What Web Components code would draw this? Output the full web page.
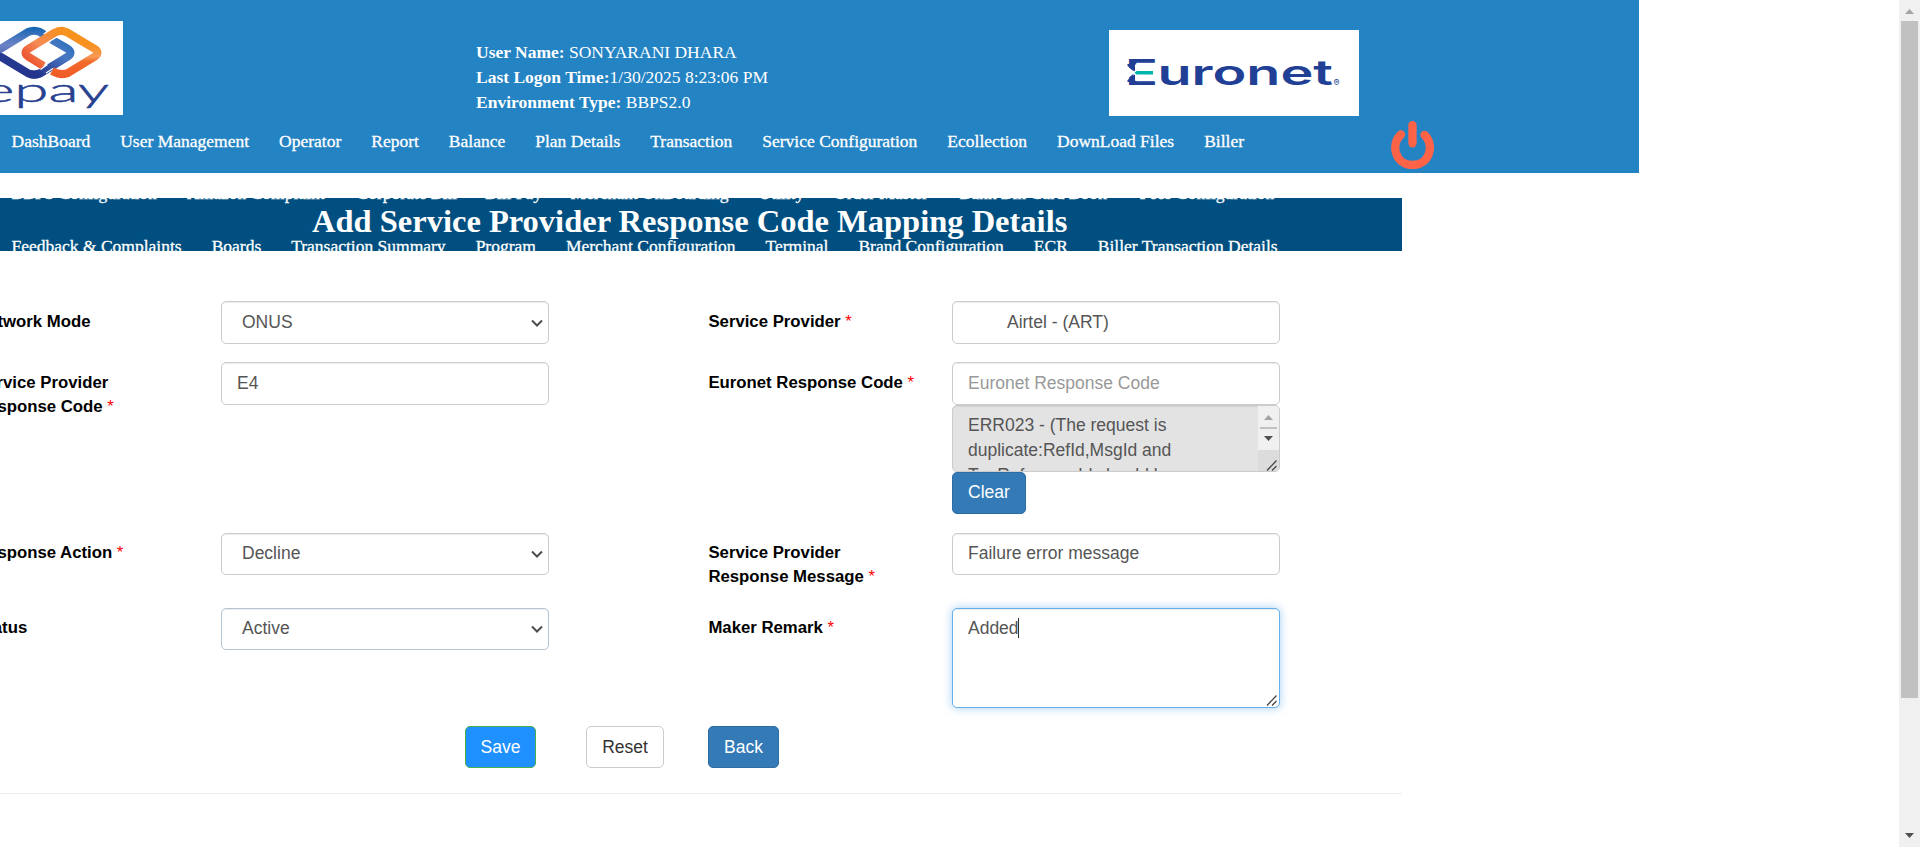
<!DOCTYPE html>
<html lang="en">
<head>
<meta charset="utf-8">
<title>Add Service Provider Response Code Mapping Details</title>
<style>
html,body{margin:0;height:100%;overflow:hidden;background:#fff}
body{font-family:"Liberation Sans",Arial,sans-serif;font-size:17.5px;line-height:25px;color:#000}
</style>
</head>
<body>
<app-shell></app-shell>
<script>
const define = (name, html, setup) => customElements.define(name, class extends HTMLElement {
  connectedCallback() {
    if (this.shadowRoot) return;
    const root = this.attachShadow({mode: 'open'});
    const t = document.createElement('template');
    t.innerHTML = html;
    root.append(t.content.cloneNode(true));
    if (setup) setup(this, root);
  }
});

define('epay-logo', `<style>:host{display:block;width:123px;height:94px;background:#fff;overflow:hidden}svg{display:block}</style>
<svg width="123" height="94" viewBox="0 21 123 94">
<defs>
<linearGradient id="b" x1="0" y1="27" x2="0" y2="78" gradientUnits="userSpaceOnUse"><stop offset="0" stop-color="#1265b3"/><stop offset=".35" stop-color="#6d83c6"/><stop offset=".5" stop-color="#5672bb"/><stop offset=".52" stop-color="#263b92"/><stop offset="1" stop-color="#24348c"/></linearGradient>
<linearGradient id="c" x1="70" y1="40" x2="40" y2="76" gradientUnits="userSpaceOnUse"><stop offset="0" stop-color="#2770bb"/><stop offset=".35" stop-color="#4a78c3"/><stop offset="1" stop-color="#24348c"/></linearGradient>
<linearGradient id="o" x1="0" y1="27" x2="0" y2="78" gradientUnits="userSpaceOnUse"><stop offset="0" stop-color="#f7941e"/><stop offset=".35" stop-color="#f7901f"/><stop offset=".58" stop-color="#f79a55"/><stop offset=".68" stop-color="#f26a2a"/><stop offset="1" stop-color="#f15a29"/></linearGradient>
<linearGradient id="p" x1="58" y1="28" x2="28" y2="58" gradientUnits="userSpaceOnUse"><stop offset="0" stop-color="#f7901f"/><stop offset=".6" stop-color="#f58a55"/><stop offset="1" stop-color="#ee5a34"/></linearGradient>
</defs>
<g fill="none" stroke-width="8">
<path stroke="url(#b)" d="M44 34.500L40 32Q34 29.500 28 32L1 48.500Q-6 52.5 1 57L28 73.200Q34 75.700 40 73.200"/>
<path stroke="url(#c)" d="M51.500 39.500L68 49Q73 52.500 68 56.500L41 73Q35 75.700 30 74"/>
<path stroke="url(#o)" d="M58 31.500Q62 30 67.500 32.500L95 49Q100 52.500 95 56.500L68 73Q61 76 52 71"/>
<path stroke="#fff" stroke-width="10.500" d="M46 38L58 31"/>
<path stroke="url(#p)" d="M64 31Q59 30.300 54 33L28 49Q23 52.500 28 56.500L43.500 66"/>
<path stroke="#fff" stroke-width="1.200" d="M40.500 69.500L47.500 64.500M46 73L53 68.600"/>
</g>
<text x="-18" y="102" font-family="Lato,sans-serif" font-weight="300" font-size="33" fill="#27408f" stroke="#27408f" stroke-width=".5" textLength="127" lengthAdjust="spacingAndGlyphs">epay</text>
</svg>`);

define('euronet-logo', `<style>:host{display:block;width:250px;height:86px;background:#fff}svg{display:block}</style>
<svg width="250" height="86" font-family="Inter,sans-serif" font-weight="700" fill="#213f94">
<text x="16" y="55.300" font-size="35" font-weight="600" textLength="33" lengthAdjust="spacingAndGlyphs">E</text>
<path fill="#fff" d="M17 35L26 42.500 17 50ZM24.500 34.500H48V50.800H24.500Z"/>
<path fill="#213f94" d="M18.500 36V34L26 34V41.500ZM18.500 50V52H26V44.500Z"/>
<path fill="#00b5ad" d="M27.500 41H44V44.500H27.500L25.500 42.700Z"/>
<text x="48.500" y="55.300" font-size="35" font-weight="600" textLength="175.500" lengthAdjust="spacingAndGlyphs">uronet</text>
<text x="224.500" y="56" font-size="9" font-weight="400">®</text>
</svg>`);

define('power-button', `<style>:host{display:block;width:43px;height:48px}svg{display:block}</style>
<svg width="43" height="48" fill="none" stroke="#ff6347" stroke-linecap="round"><path stroke-width="8.300" d="M21.500 4.200V22.300"/><path stroke-width="8.300" d="M10 13.500C-.5 22.500 3.500 44 21.500 44S43.500 22.500 33.500 14"/></svg>`);

define('nav-row', `<style>:host{display:flex;gap:30px;height:52px;align-items:flex-start;padding-left:11.5px;font:17.5px/25px "Liberation Serif","Times New Roman",serif;color:#fff;white-space:nowrap;-webkit-text-stroke:.3px #fff}:host([tall]){height:53px}</style>`,
  (el, root) => el.getAttribute('items').split('|').forEach(s => {
    const [text, w] = s.split('~');
    const a = document.createElement('span'); a.textContent = text;
    if (w) a.style.width = w + 'px';
    root.append(a);
  }));

define('user-info', `<style>:host{display:block;font:17.5px/25px "Liberation Serif","Times New Roman",serif;color:#fff;white-space:nowrap}</style>
<div><b>User Name:</b> SONYARANI DHARA</div><div><b>Last Logon Time:</b>1/30/2025 8:23:06 PM</div><div><b>Environment Type:</b> BBPS2.0</div>`);

define('app-header', `<style>
:host{display:block;position:relative;z-index:2;width:1639px;height:173px;background:#2483c3}
.top{display:flex;align-items:flex-start;height:129px}
epay-logo{margin-top:21px}
user-info{margin:40px 0 0 353px;width:633px}
euronet-logo{margin-top:30px}
power-button{margin:121px 0 0 32px}
</style>
<div class="top"><epay-logo></epay-logo><user-info></user-info><euronet-logo></euronet-logo><power-button></power-button></div>
<nav>
<nav-row items="DashBoard|User Management|Operator|Report|Balance|Plan Details|Transaction|Service Configuration|Ecollection|DownLoad Files|Biller"></nav-row>
<nav-row tall items="BBPS Configuration~145.5|Amazon Complaint~139.5|Corporate Bill~98.5|Bill Pay~55.5|Merchant OnBoarding~158|Utility~45.5|Order Master~95.5|Bank Bin Card Book~150|Fees Configuration~136"></nav-row>
<nav-row items="Feedback &amp; Complaints|Boards|Transaction Summary|Program|Merchant Configuration|Terminal|Brand Configuration|ECR|Biller Transaction Details"></nav-row>
</nav>`);

define('page-title', `<style>:host{display:block;box-sizing:border-box;width:1402px;height:53px;margin-top:25px;padding:5px 0 0 312px;background:#004f80}
h1{margin:0;font:bold 32.5px/37px "Liberation Serif","Times New Roman",serif;color:#fff;white-space:nowrap}</style><h1><slot></slot></h1>`);

define('field-label', `<style>:host{display:block;padding-top:9px;font-weight:700;font-size:16.75px;line-height:24px;white-space:nowrap}:host([tight]){padding-top:8px}i{font-style:normal;font-weight:400;color:red}</style><slot></slot>`,
  (el, root) => { if (el.hasAttribute('required')) { const i = document.createElement('i'); i.textContent = ' *'; root.append(i); } });

define('text-field', `<style>:host{display:block;box-sizing:border-box;height:43px;border:1px solid #ccc;border-radius:5px;padding:7.5px 15px;background:#fff;color:#555;box-shadow:inset 0 1px 1px rgba(0,0,0,.075);white-space:nowrap}
:host([short]){height:42px;padding-top:7px}:host([placeholder]){color:#999}:host([indent]){padding-left:54px}</style><slot></slot>`);

define('select-field', `<style>:host{display:flex;justify-content:space-between;box-sizing:border-box;height:43px;border:1px solid #ccc;border-radius:5px;padding:7.5px 5px 0 20px;background:#fff;color:#555;box-shadow:inset 0 1px 1px rgba(0,0,0,.075)}
:host([short]){height:42px;padding-top:7px}:host([tinted]){border-color:#b4c6d6}svg{margin-top:9px}</style><slot></slot>
<svg width="12" height="9" fill="none" stroke="#4d4d4d" stroke-width="2"><path d="M1 1.500L6 6.500 11 1.500"/></svg>`);

const grip = '<svg class="grip" width="12" height="11" stroke="#444" stroke-width="1.300"><path d="M1 10.500L10.500 .5M6 10.500L10.500 6"/></svg>';
define('code-area', `<style>:host{display:flex;box-sizing:border-box;height:67px;border:1px solid #ccc;border-radius:5px;background:#e3e3e3;color:#555;overflow:hidden;box-shadow:inset 0 1px 1px rgba(0,0,0,.075)}
.t{flex:1;padding:7px 0 0 15px;white-space:pre}
.s{width:21px;background:#dcdcdc;display:flex;flex-direction:column}
.s svg{display:block}.grip{margin:10px 0 0 8px}</style><div class="t"><slot></slot></div>
<div class="s"><svg width="21" height="44"><path fill="#f0f0f0" d="M0 0h21v44H0z"/><path fill="#a3a3a3" d="M6 14l4.500-5 4.500 5z"/><path fill="#c1c1c1" d="M2 21h17v2H2z"/><path fill="#505050" d="M6 30l4.500 5 4.500-5z"/></svg>${grip}</div>`);

define('remark-area', `<style>:host{display:flex;justify-content:space-between;box-sizing:border-box;height:100px;border:1px solid #66afe9;border-radius:5px;padding:6px 1px 1px 15px;background:#fff;color:#555;box-shadow:inset 0 1px 1px rgba(0,0,0,.075),0 0 10px rgba(102,175,233,.6)}
.t{border-right:1px solid #333;height:20px;margin-top:3px;line-height:20px;width:50px;white-space:nowrap}.grip{align-self:flex-end}</style><div class="t"><slot></slot></div>${grip}`);

define('action-button', `<style>:host{display:block;box-sizing:border-box;height:42px;border:1px solid #2e6da4;border-radius:5px;background:#337ab7;color:#fff;text-align:center;line-height:40px}
:host([kind=save]){background:#1e90ff;border-color:#4cae4c}:host([kind=plain]){background:#fff;border-color:#ccc;color:#333}</style><slot></slot>`);

define('mapping-form', `<style>
:host{display:block;width:1402px;margin-top:50px;border-bottom:1px solid #eee;height:492px}
.g{display:grid;margin-left:-24px;grid-template-columns:245px 328px 159.4px 243.6px 328px;grid-template-rows:61px 171px 75px 118px;align-items:start}
.c3{grid-column:4}
.clear{width:74px;line-height:38px}
.b{display:flex;padding-left:465px}
.save{width:71px;margin-right:50px}.reset{width:78px;margin-right:44px}.back{width:71px}
</style>
<div class="g">
<field-label>Network Mode</field-label><select-field>ONUS</select-field>
<field-label class="c3" required>Service Provider</field-label><text-field indent>Airtel - (ART)</text-field>
<field-label required>Service Provider<br>Response Code</field-label><text-field>E4</text-field>
<field-label class="c3" required>Euronet Response Code</field-label>
<div><text-field placeholder>Euronet Response Code</text-field><code-area>ERR023 - (The request is
duplicate:RefId,MsgId and
TxnReferenceId should be</code-area><action-button class="clear">Clear</action-button></div>
<field-label tight required>Response Action</field-label><select-field short>Decline</select-field>
<field-label tight class="c3" required>Service Provider<br>Response Message</field-label><text-field short>Failure error message</text-field>
<field-label tight>Status</field-label><select-field short tinted>Active</select-field>
<field-label tight class="c3" required>Maker Remark</field-label><remark-area>Added</remark-area>
</div>
<div class="b"><action-button class="save" kind="save">Save</action-button><action-button class="reset" kind="plain">Reset</action-button><action-button class="back">Back</action-button></div>`);

define('page-scrollbar', `<style>:host{display:flex;flex-direction:column;justify-content:space-between;width:21px;height:100%;background:#f0f0f0}svg{display:block}.th{width:17px;height:677px;margin:0 2px;background:#c1c1c1}.sp{flex:1}</style>
<svg width="21" height="21"><path fill="#a3a3a3" d="M6 14l4.500-5 4.500 5z"/></svg><div class="th"></div><div class="sp"></div>
<svg width="21" height="21"><path fill="#505050" d="M6 7l4.500 5 4.500-5z"/></svg>`);

define('app-shell', `<style>:host{display:flex;height:847px;overflow:hidden}main{flex:1;min-width:0;overflow:hidden}</style>
<main><app-header></app-header><page-title>Add Service Provider Response Code Mapping Details</page-title><mapping-form></mapping-form></main><page-scrollbar></page-scrollbar>`);
</script>
</body>
</html>
